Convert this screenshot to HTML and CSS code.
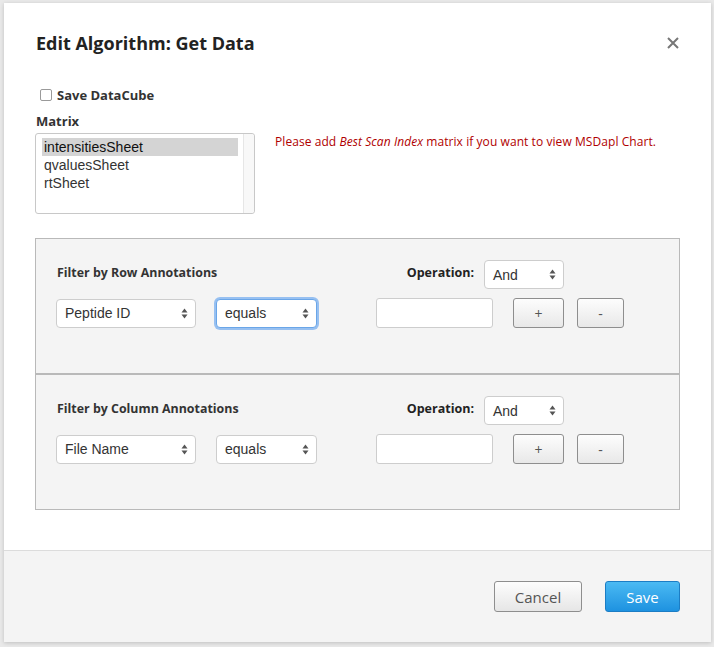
FILE: index.html
```html
<!DOCTYPE html>
<html>
<head>
<meta charset="utf-8">
<link rel="stylesheet" href="styles.css">
</head>
<body>
<div class="dialog">
  <div class="header">
    <h1 class="title">Edit Algorithm: Get Data</h1>
    <svg class="close" width="12" height="12" viewBox="0 0 12 12"><path d="M1 1L11 11M11 1L1 11" stroke="#777" stroke-width="2" fill="none"/></svg>
  </div>
  <div class="body">
    <label class="check-row"><span class="checkbox"></span><span class="check-label">Save DataCube</span></label>
    <div class="field-label">Matrix</div>
    <div class="matrix-row">
      <div class="listbox">
        <div class="options">
          <div class="option selected">intensitiesSheet</div>
          <div class="option">qvaluesSheet</div>
          <div class="option">rtSheet</div>
        </div>
        <div class="gutter"></div>
      </div>
      <p class="warning">Please add <em>Best Scan Index</em> matrix if you want to view MSDapl Chart.</p>
    </div>

    <div class="panel">
      <div class="top-row">
        <div class="panel-title">Filter by Row Annotations</div>
        <div class="op">
          <span class="op-label">Operation:</span>
          <div class="select op-select"><span>And</span><svg class="arrows" width="7" height="11" viewBox="0 0 7 11"><path d="M3.5 0.5L6.5 4.5H0.5Z M3.5 10.5L6.5 6.5H0.5Z" fill="#555"/></svg></div>
        </div>
      </div>
      <div class="filter-row">
        <div class="select w-field"><span>Peptide ID</span><svg class="arrows" width="7" height="11" viewBox="0 0 7 11"><path d="M3.5 0.5L6.5 4.5H0.5Z M3.5 10.5L6.5 6.5H0.5Z" fill="#555"/></svg></div>
        <div class="select w-cmp focused"><span>equals</span><svg class="arrows" width="7" height="11" viewBox="0 0 7 11"><path d="M3.5 0.5L6.5 4.5H0.5Z M3.5 10.5L6.5 6.5H0.5Z" fill="#555"/></svg></div>
        <div class="text-input"></div>
        <button class="small-btn plus">+</button>
        <button class="small-btn minus">-</button>
      </div>
    </div>

    <div class="panel">
      <div class="top-row">
        <div class="panel-title">Filter by Column Annotations</div>
        <div class="op">
          <span class="op-label">Operation:</span>
          <div class="select op-select"><span>And</span><svg class="arrows" width="7" height="11" viewBox="0 0 7 11"><path d="M3.5 0.5L6.5 4.5H0.5Z M3.5 10.5L6.5 6.5H0.5Z" fill="#555"/></svg></div>
        </div>
      </div>
      <div class="filter-row">
        <div class="select w-field"><span>File Name</span><svg class="arrows" width="7" height="11" viewBox="0 0 7 11"><path d="M3.5 0.5L6.5 4.5H0.5Z M3.5 10.5L6.5 6.5H0.5Z" fill="#555"/></svg></div>
        <div class="select w-cmp"><span>equals</span><svg class="arrows" width="7" height="11" viewBox="0 0 7 11"><path d="M3.5 0.5L6.5 4.5H0.5Z M3.5 10.5L6.5 6.5H0.5Z" fill="#555"/></svg></div>
        <div class="text-input"></div>
        <button class="small-btn plus">+</button>
        <button class="small-btn minus">-</button>
      </div>
    </div>
  </div>
  <div class="footer">
    <button class="btn btn-cancel">Cancel</button>
    <button class="btn btn-save">Save</button>
  </div>
</div>
</body>
</html>
```

FILE: styles.css
```css
* { box-sizing: border-box; }
html, body { margin: 0; padding: 0; }
body {
  background: #e9e9e9;
  width: 714px;
  height: 647px;
  overflow: hidden;
  padding: 3px 0 0 4px;
  font-family: "Open Sans", "Liberation Sans", sans-serif;
  color: #333;
}
.dialog {
  width: 707px;
  height: 639px;
  background: #fff;
  display: flex;
  flex-direction: column;
  box-shadow: 0 1px 4px rgba(0,0,0,0.18);
}
.header {
  padding: 26px 32px 0 32px;
  display: flex;
  align-items: center;
  justify-content: space-between;
}
.title {
  margin: 0;
  font-size: 18px;
  line-height: 28px;
  font-weight: 700;
  color: #222;
}
.close { display: block; }
.body {
  padding: 0 31px 40px 31px;
}
.check-row {
  display: flex;
  align-items: center;
  margin-top: 28px;
  height: 20px;
  padding-left: 5px;
}
.checkbox {
  width: 12px;
  height: 12px;
  border: 1px solid #9a9a9a;
  border-radius: 2px;
  background: #fff;
}
.check-label {
  margin-left: 5px;
  font-size: 13px;
  font-weight: 700;
  color: #333;
}
.field-label {
  margin-top: 7px;
  padding-left: 1px;
  font-size: 13px;
  font-weight: 700;
  line-height: 18px;
  color: #333;
}
.matrix-row {
  display: flex;
  align-items: flex-start;
  margin-top: 3px;
}
.listbox {
  width: 220px;
  height: 81px;
  border: 1px solid #c8c8c8;
  border-radius: 3px;
  display: flex;
  background: #fff;
}
.options {
  flex: 1;
  padding: 4px 5px 0 6px;
}
.option {
  font-family: "Liberation Sans", Arial, sans-serif;
  font-size: 14px;
  line-height: 18px;
  color: #333;
  padding-left: 2px;
}
.option.selected {
  background: #d4d4d4;
  color: #111;
}
.gutter {
  width: 11px;
  border-left: 1px solid #e6e6e6;
  background: #f8f8f8;
  border-radius: 0 3px 3px 0;
}
.warning {
  margin: 0 0 0 20px;
  padding-top: 0;
  font-size: 12px;
  line-height: 18px;
  letter-spacing: 0.07px;
  color: #b00000;
}
.warning em { font-style: italic; }

.panel {
  background: #f4f4f4;
  border: 1px solid #b9b9b9;
  padding: 21px 20px 45px 20px;
}
.matrix-row + .panel { margin-top: 24px; }
.top-row {
  width: 567px;
  display: flex;
  align-items: center;
  justify-content: space-between;
  height: 29px;
}
.panel-title {
  padding-left: 1px;
  font-size: 12.4px;
  font-weight: 700;
  color: #333;
  margin-top: -5px;
}
.op {
  display: flex;
  align-items: center;
  margin-right: 59px;
}
.op-label {
  font-size: 12.5px;
  font-weight: 700;
  color: #222;
  margin-right: 10px;
  margin-top: -5px;
}
.select {
  height: 29px;
  border: 1px solid #cdcdcd;
  border-radius: 4px;
  background: #fff;
  display: flex;
  align-items: center;
  justify-content: space-between;
  padding: 0 7px 0 8px;
  font-family: "Liberation Sans", Arial, sans-serif;
  font-size: 14px;
  color: #333;
}
.arrows { display: block; }
.op-select { width: 80px; }
.filter-row {
  margin-top: 9px;
  display: flex;
  align-items: center;
  height: 30px;
}
.w-field { width: 140px; }
.w-cmp { width: 101px; margin-left: 20px; }
.focused {
  border: 1px solid #6aa6e8;
  box-shadow: 0 0 0 2px rgba(120,175,240,0.75);
}
.text-input {
  width: 117px;
  height: 30px;
  margin-left: 59px;
  border: 1px solid #cdcdcd;
  border-radius: 3px;
  background: #fff;
}
.small-btn {
  height: 30px;
  border: 1px solid #8e8e8e;
  border-radius: 3px;
  background: linear-gradient(#fdfdfd, #e8e8e8);
  font-family: "Open Sans", sans-serif;
  font-size: 14px;
  color: #555;
  padding: 0;
}
.plus { width: 51px; margin-left: 20px; }
.minus { width: 47px; margin-left: 13px; }

.footer {
  flex: 1;
  background: #f4f4f4;
  border-top: 1px solid #dcdcdc;
  display: flex;
  justify-content: flex-end;
  align-items: flex-start;
  padding: 30px 31px 0 0;
}
.btn {
  height: 31px;
  border-radius: 3px;
  font-family: "Open Sans", sans-serif;
  font-size: 15px;
  padding: 0;
}
.btn-cancel {
  width: 88px;
  border: 1px solid #8e8e8e;
  background: linear-gradient(#fdfdfd, #e6e6e6);
  color: #555;
}
.btn-save {
  width: 75px;
  margin-left: 23px;
  border: 1px solid #1c7dc4;
  background: linear-gradient(#4bbaf3, #1e92e0);
  color: #fff;
}
```
